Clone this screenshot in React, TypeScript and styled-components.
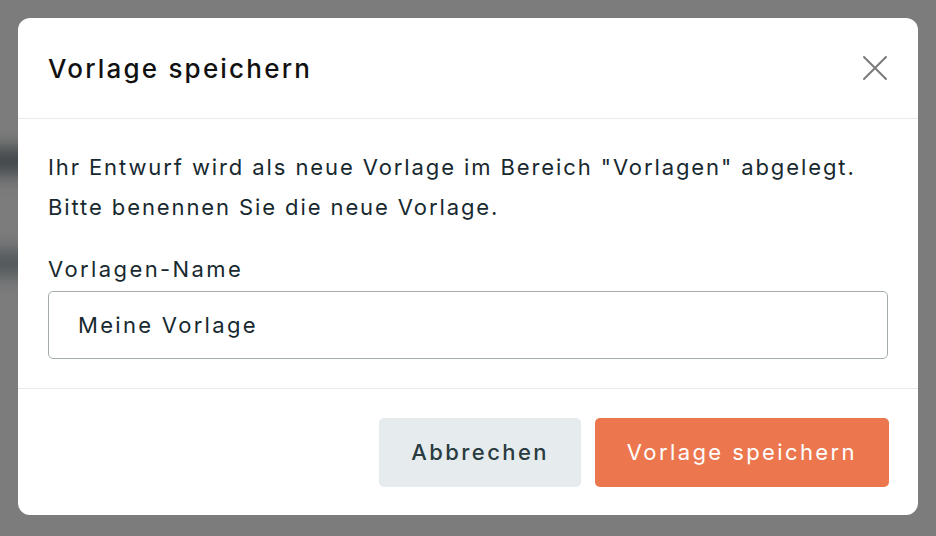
import styled, { createGlobalStyle } from 'styled-components';

const GlobalStyle = createGlobalStyle`
    html, body {
        margin: 0;
        padding: 0;
        width: 100%;
        height: 100%;
        overflow: hidden;
        background: #7b7b7b;
        font-family: Inter, "Open Sans", sans-serif;
    }
`

const Backdrop = styled.div`
    position: fixed;
    inset: 0;
    background: #7c7c7c;
    overflow: hidden;
`

const BlurBand = styled.div<{ top: number; shade: string }>`
    position: absolute;
    left: -40px;
    top: ${p => p.top}px;
    width: 120px;
    height: 26px;
    background: ${p => p.shade};
    filter: blur(9px);
`

const Overlay = styled.div`
    position: fixed;
    inset: 0;
    display: flex;
    justify-content: center;
    align-items: flex-start;
    padding-top: 18px;
`

const Modal = styled.div`
    width: 900px;
    height: 497px;
    background: #fff;
    border-radius: 12px;
    display: flex;
    flex-direction: column;
    overflow: hidden;
`

const Header = styled.div`
    height: 101px;
    display: flex;
    align-items: center;
    justify-content: space-between;
    padding: 0 28px 0 30px;
    border-bottom: 1px solid #e9eaeb;
    box-sizing: border-box;
`

const Title = styled.h2`
    margin: 0;
    font-size: 26px;
    font-weight: 500;
    color: #111;
    letter-spacing: 2.2px;
`

const CloseButton = styled.button`
    width: 30px;
    height: 30px;
    padding: 0;
    border: none;
    background: none;
    display: flex;
    align-items: center;
    justify-content: center;
    cursor: pointer;
`

const Body = styled.div`
    padding: 28px 30px 29px;
    border-bottom: 1px solid #e9eaeb;
`

const Intro = styled.p`
    margin: 0;
    font-size: 22px;
    line-height: 40px;
    color: #17292f;
    letter-spacing: 1.9px;
`

const Label = styled.label`
    display: block;
    margin-top: 27px;
    font-size: 22px;
    line-height: 30px;
    color: #17292f;
    letter-spacing: 2.4px;
`

const NameInput = styled.input`
    display: block;
    width: 100%;
    height: 68px;
    margin-top: 7px;
    box-sizing: border-box;
    padding: 0 29px;
    border: 1px solid #a4acb0;
    border-radius: 5px;
    font-family: inherit;
    font-size: 22px;
    color: #17292f;
    letter-spacing: 2.3px;
    outline: none;
`

const Footer = styled.div`
    flex: 1;
    display: flex;
    justify-content: flex-end;
    align-items: center;
    gap: 14px;
    padding: 0 29px;
`

const Button = styled.button<{ primary?: boolean }>`
    height: 69px;
    padding: 0 32px;
    border: none;
    border-radius: 5px;
    font-family: inherit;
    font-size: 22px;
    font-weight: ${p => (p.primary ? 400 : 500)};
    letter-spacing: 2.4px;
    background: ${p => (p.primary ? '#ec774f' : '#e6ebee')};
    color: ${p => (p.primary ? '#fff' : '#2a3b41')};
    cursor: pointer;
`

function App() {
    return (
        <>
            <GlobalStyle />
            <Backdrop>
                <BlurBand top={148} shade="#3f4548" />
                <BlurBand top={250} shade="#50575a" />
            </Backdrop>
            <Overlay>
                <Modal>
                    <Header>
                        <Title>Vorlage speichern</Title>
                        <CloseButton aria-label="Schließen">
                            <svg width="28" height="28" viewBox="0 0 28 28">
                                <path d="M3 3 L25 25 M25 3 L3 25" stroke="#7a7a7a" strokeWidth="2" strokeLinecap="round" />
                            </svg>
                        </CloseButton>
                    </Header>
                    <Body>
                        <Intro>
                            Ihr Entwurf wird als neue Vorlage im Bereich "Vorlagen" abgelegt.
                            <br />
                            Bitte benennen Sie die neue Vorlage.
                        </Intro>
                        <Label htmlFor="template-name">Vorlagen-Name</Label>
                        <NameInput id="template-name" defaultValue="Meine Vorlage" />
                    </Body>
                    <Footer>
                        <Button>Abbrechen</Button>
                        <Button primary>Vorlage speichern</Button>
                    </Footer>
                </Modal>
            </Overlay>
        </>
    )
}

export default App
